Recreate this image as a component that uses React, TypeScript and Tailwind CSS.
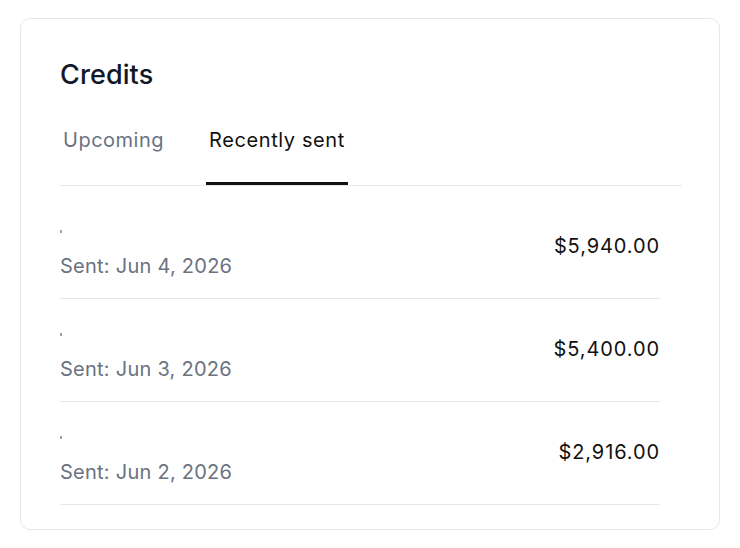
const credits = [
  { name: 'Northwind Trading Co.', sent: 'Jun 4, 2026', amount: '$5,940.00' },
  { name: 'Acme Holdings Inc.', sent: 'Jun 3, 2026', amount: '$5,400.00' },
  { name: 'Globex Corporation', sent: 'Jun 2, 2026', amount: '$2,916.00' },
  { name: 'Initech Business Services LLC', sent: 'Jun 1, 2026', amount: '$1,250.00' },
];

export default function App() {
  return (
    <div className="min-h-[548px] bg-white pt-[18px] pl-[20px] font-['Inter',_'Liberation_Sans',_sans-serif]">
      <div className="h-[512px] w-[700px] overflow-hidden rounded-[10px] border border-[#e5e7eb] bg-white pl-[39px] pr-[37px]">
        <h2 className="mt-[40px] text-[27px] font-medium leading-[32px] tracking-[0.1px] text-[#111827]">Credits</h2>

        {/* Tabs */}
        <div className="mt-[35px] flex gap-[39px] border-b border-[#e5e7eb]">
          <button className="border-b-[3px] border-transparent px-[3px] pb-[28px] text-[20px] leading-[28px] tracking-[0.5px] text-[#6b7280]">
            Upcoming
          </button>
          <button className="border-b-[3px] border-[#111] px-[3px] pb-[28px] text-[20px] leading-[28px] tracking-[0.6px] text-[#111]">
            Recently sent
          </button>
        </div>

        {/* Lista de créditos enviados */}
        <div className="mt-[10px] pr-[22px]">
          {credits.map((c) => (
            <div key={c.name} className="flex items-center justify-between border-b border-[#e5e7eb] pt-5 pb-[18px]">
              <div className="flex flex-col gap-2">
                <p className="h-7 text-[20px] leading-7 text-white">
                  <span className="mr-1 inline-block h-[3px] w-[2px] bg-[#9ca3af] align-[4px]" />
                  {c.name}
                </p>
                <p className="text-[20px] leading-7 tracking-[0.25px] text-[#6b7280]">Sent: {c.sent}</p>
              </div>
              <span className="-mt-1 text-[20px] leading-7 tracking-[0.9px] text-[#111]">{c.amount}</span>
            </div>
          ))}
        </div>
      </div>
    </div>
  );
}
